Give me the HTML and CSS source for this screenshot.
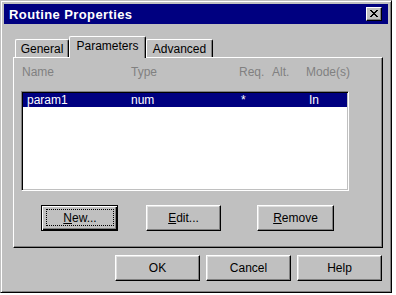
FILE: index.html
```html
<!DOCTYPE html>
<html lang="en">
<head>
  <meta charset="UTF-8" />
  <title>Routine Properties</title>
  <link rel="stylesheet" href="styles.css">
</head>
<body>

  <div class="window">
    <div class="titlebar">
      <span class="title">Routine Properties</span>
      <button class="close-btn" aria-label="Close">
        <svg width="8" height="7" viewBox="0 0 8 7">
          <path d="M0 0h2v1h1v1h2v-1h1v-1h2v1h-1v1h-1v1h-1v1h1v1h1v1h1v1h-2v-1h-1v-1h-2v1h-1v1h-2v-1h1v-1h1v-1h1v-1h-1v-1h-1v-1h-1z" fill="#000"/>
        </svg>
      </button>
    </div>

    <div class="dialog-body">
      <div class="tabs">
        <div class="tab tab-general">General</div>
        <div class="tab tab-params active">Parameters</div>
        <div class="tab tab-advanced">Advanced</div>
      </div>

      <div class="panel">
        <div class="col-headers">
          <span>Name</span>
          <span>Type</span>
          <span>Req.</span>
          <span>Alt.</span>
          <span>Mode(s)</span>
        </div>

        <div class="listbox">
          <div class="list-row selected">
            <span>param1</span>
            <span>num</span>
            <span class="req">*</span>
            <span>In</span>
          </div>
        </div>

        <div class="panel-actions">
          <button class="btn btn-default btn-new"><span class="focus-rect"><u>N</u>ew...</span></button>
          <button class="btn btn-edit"><span><u>E</u>dit...</span></button>
          <button class="btn btn-remove"><span><u>R</u>emove</span></button>
        </div>
      </div>

      <div class="footer">
        <button class="btn btn-footer"><span>OK</span></button>
        <button class="btn btn-footer"><span>Cancel</span></button>
        <button class="btn btn-footer"><span>Help</span></button>
      </div>
    </div>
  </div>

</body>
</html>
```

FILE: styles.css
```css
body {
  margin: 0;
  background: #fff;
  font-family: 'Liberation Sans', Arial, sans-serif;
  font-size: 12px;
  color: #000;
}
.window {
  box-sizing: border-box;
  width: 392px;
  height: 293px;
  padding: 3px;
  background: #c0c0c0;
  border: 1px solid;
  border-color: #c0c0c0 #000 #000 #c0c0c0;
  box-shadow: inset 1px 1px #fff, inset -1px -1px #808080;
}
.titlebar {
  height: 20px;
  background: #000080;
  display: flex;
  align-items: center;
  justify-content: space-between;
  padding: 0 6px 0 5px;
}
.title {
  color: #fff;
  font-weight: bold;
  font-size: 13px;
  letter-spacing: 0.4px;
}
.close-btn {
  box-sizing: border-box;
  width: 16px;
  height: 14px;
  padding: 0;
  background: #c0c0c0;
  border: 1px solid;
  border-color: #fff #000 #000 #fff;
  box-shadow: inset -1px -1px #808080;
  display: flex;
  align-items: center;
  justify-content: center;
}
.close-btn svg { display: block; margin: 0 0 1px 0; }

.dialog-body {
  padding: 12px 5px 0 9px;
}
.tabs {
  display: flex;
  align-items: flex-end;
  height: 21px;
  padding-left: 2px;
}
.tab {
  box-sizing: border-box;
  height: 18px;
  padding-top: 2px;
  line-height: 14px;
  text-align: center;
  background: #c0c0c0;
  border-top: 1px solid #fff;
  border-left: 1px solid #fff;
  border-right: 1px solid #000;
  border-radius: 2px 2px 0 0;
  box-shadow: inset -1px 0 #808080;
}
.tab-general { width: 54px; }
.tab-params { width: 77px; }
.tab-advanced { width: 67px; }
.tab.active {
  height: 22px;
  margin-bottom: -1px;
  position: relative;
  z-index: 1;
}

.panel {
  box-sizing: border-box;
  height: 191px;
  padding: 7px 0 0 7px;
  border: 1px solid;
  border-color: #fff #000 #000 #fff;
  box-shadow: inset -1px -1px #808080;
}
.col-headers {
  display: grid;
  grid-template-columns: 109px 108px 33px 34px auto;
  padding-left: 1px;
  line-height: 14px;
  color: #808080;
}
.listbox {
  box-sizing: border-box;
  width: 328px;
  height: 100px;
  margin-top: 12px;
  padding: 0;
  background: #fff;
  border: 1px solid;
  border-color: #808080 #fff #fff #808080;
  box-shadow: inset 1px 1px #000, inset -1px -1px #c0c0c0;
}
.list-row {
  display: grid;
  grid-template-columns: 104px 110px 68px auto;
  margin: 1px 1px 0 1px;
  padding-left: 4px;
  height: 14px;
  line-height: 14px;
}
.list-row.selected {
  background: #000080;
  color: #fff;
}

.panel-actions {
  display: flex;
  margin-top: 14px;
  padding-left: 20px;
}
.btn {
  box-sizing: border-box;
  height: 26px;
  padding: 0;
  background: #c0c0c0;
  font-family: inherit;
  font-size: 12px;
  color: #000;
  border: 1px solid;
  border-color: #fff #000 #000 #fff;
  box-shadow: inset -1px -1px #808080, inset 1px 1px #dfdfdf;
  display: flex;
  align-items: stretch;
}
.btn span {
  flex: 1;
  display: flex;
  align-items: center;
  justify-content: center;
  margin: 3px;
}
.btn-default {
  border-color: #000;
  box-shadow: inset 1px 1px #fff, inset -1px -1px #000, inset -2px -2px #808080;
}
.btn .focus-rect {
  border: 1px dotted #000;
  margin: 3px 3px 4px 4px;
}
.btn-new { width: 77px; }
.btn-edit { width: 75px; margin-left: 28px; }
.btn-remove { width: 77px; margin-left: 36px; }

.footer {
  display: flex;
  justify-content: flex-end;
  gap: 6px;
  margin-top: 7px;
  padding-right: 1px;
}
.btn-footer { width: 85px; }
```
